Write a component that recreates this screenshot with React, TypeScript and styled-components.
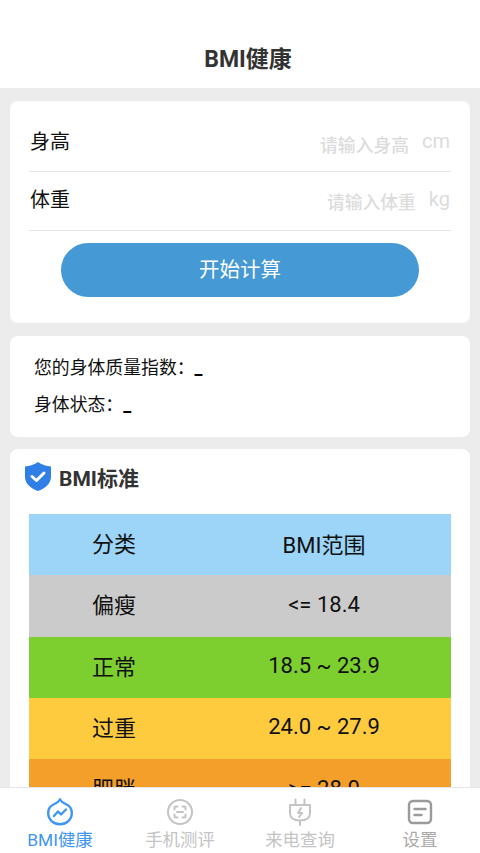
import React from 'react'
import styled, { createGlobalStyle } from 'styled-components'

const GlobalStyle = createGlobalStyle`
  html, body {
    margin: 0;
    padding: 0;
    height: 100%;
    overflow: hidden;
  }
  body {
    font-family: Roboto, "Noto Sans CJK SC", sans-serif;
    background: #ececec;
  }
`

const Screen = styled.div`
  height: 853px;
  width: 480px;
  display: flex;
  flex-direction: column;
  overflow: hidden;
  background: #ececec;
`
const Header = styled.header`
  height: 88px;
  flex: none;
  box-sizing: border-box;
  padding: 42px 0 0 16px;
  background: #fff;
  text-align: center;
  font-size: 23px;
  line-height: 36px;
  font-weight: 700;
  color: #333;
`
const Content = styled.main`
  flex: 1;
  min-height: 0;
  overflow: hidden;
  padding: 13px 10px 0;
  display: flex;
  flex-direction: column;
`
const Card = styled.section`
  flex: none;
  background: #fff;
  border-radius: 8px;
`
const FormCard = styled(Card)`
  height: 222px;
  box-sizing: border-box;
  padding: 12px 19px 0;
`
const Field = styled.div<{ $height: number; $lift: number }>`
  height: ${p => p.$height}px;
  box-sizing: border-box;
  padding-bottom: ${p => p.$lift}px;
  border-bottom: 1px solid #e4e4e4;
  display: flex;
  align-items: center;
  justify-content: space-between;
`
const FieldLabel = styled.span`
  font-size: 20px;
  color: #111;
  margin: -3px 0 0 1px;
`
const FieldRight = styled.div`
  display: flex;
  align-items: center;
  gap: 13px;
  margin-right: 1px;
`
const Placeholder = styled.span`
  font-size: 17.800px;
  font-weight: 500;
  color: #dcdcdc;
  margin-top: 3px;
`
const Unit = styled.span`
  font-size: 20px;
  color: #dcdcdc;
  margin-top: -2px;
`
const CalcButton = styled.button`
  display: block;
  width: 358px;
  height: 54px;
  margin: 12px auto 0;
  border: none;
  border-radius: 27px;
  background: #4599d4;
  color: #fff;
  font: inherit;
  font-size: 20.500px;
  padding: 0 0 5px;
`
const ResultCard = styled(Card)`
  height: 101px;
  margin-top: 13px;
  box-sizing: border-box;
  padding: 18px 24px 0;
  display: flex;
  flex-direction: column;
  gap: 9px;
`
const ResultRow = styled.div`
  font-size: 17.850px;
  line-height: 28px;
  color: #111;
`
const Blank = styled.span`
  font-weight: 700;
  color: #000;
`
const StandardCard = styled(Card)`
  margin-top: 12px;
  padding: 0 19px;
  height: 400px;
`
const StandardTitle = styled.div`
  height: 65px;
  box-sizing: border-box;
  padding-bottom: 10px;
  display: flex;
  align-items: center;
  gap: 8px;
  margin-left: -4px;
  font-size: 21px;
  font-weight: 700;
  color: #333;
`
const ScaleTable = styled.div`
  display: flex;
  flex-direction: column;
`
const ScaleRow = styled.div<{ $bg: string }>`
  height: 61.250px;
  display: grid;
  grid-template-columns: 168px 1fr;
  align-items: center;
  background: ${p => p.$bg};
  color: #111;
  font-size: 22px;
`
const ScaleName = styled.span`
  padding: 0 0 5px 63px;
`
const ScaleRange = styled.span`
  text-align: center;
  padding-bottom: 3px;
`
const TabBar = styled.nav`
  height: 65px;
  flex: none;
  background: #fff;
  border-top: 1px solid #e6e6e6;
  display: grid;
  grid-template-columns: repeat(4, 120px);
`
const Tab = styled.div<{ $color: string }>`
  display: flex;
  flex-direction: column;
  align-items: center;
  padding-top: 10px;
  color: ${p => p.$color};
  font-size: 17.400px;
  line-height: 28px;
`
const TabIcon = styled.svg`
  display: block;
  width: 28px;
  height: 28px;
`

const rows = [
  { name: '分类', range: 'BMI范围', bg: '#9cd5f7' },
  { name: '偏瘦', range: '<= 18.4', bg: '#cbcbcb' },
  { name: '正常', range: '18.5 ~ 23.9', bg: '#7dce2f' },
  { name: '过重', range: '24.0 ~ 27.9', bg: '#fecb3e' },
  { name: '肥胖', range: '>= 28.0', bg: '#f39f2a' },
]

export default function App() {
  return (
    <Screen>
      <GlobalStyle />
      <Header>BMI健康</Header>
      <Content>
        <FormCard>
          <Field $height={59} $lift={0}>
            <FieldLabel>身高</FieldLabel>
            <FieldRight>
              <Placeholder>请输入身高</Placeholder>
              <Unit>cm</Unit>
            </FieldRight>
          </Field>
          <Field $height={59} $lift={3}>
            <FieldLabel>体重</FieldLabel>
            <FieldRight>
              <Placeholder>请输入体重</Placeholder>
              <Unit>kg</Unit>
            </FieldRight>
          </Field>
          <CalcButton type="button">开始计算</CalcButton>
        </FormCard>

        <ResultCard>
          <ResultRow>您的身体质量指数：<Blank>_</Blank></ResultRow>
          <ResultRow>身体状态：<Blank>_</Blank></ResultRow>
        </ResultCard>

        <StandardCard>
          <StandardTitle>
            <svg width="26" height="29" viewBox="0 0 26 29">
              <path d="M13 0 C16.500 2.500 21 4 26 4.500 V15 C26 21.500 20 26.500 13 29 C6 26.500 0 21.500 0 15 V4.500 C5 4 9.500 2.500 13 0 Z" fill="#2f7fe6" />
              <path d="M7 14.500 L11.500 18.500 L19 11" fill="none" stroke="#fff" strokeWidth="3" strokeLinecap="round" strokeLinejoin="round" />
            </svg>
            BMI标准
          </StandardTitle>
          <ScaleTable>
            {rows.map(r => (
              <ScaleRow key={r.name} $bg={r.bg}>
                <ScaleName>{r.name}</ScaleName>
                <ScaleRange>{r.range}</ScaleRange>
              </ScaleRow>
            ))}
          </ScaleTable>
        </StandardCard>
      </Content>

      <TabBar>
        <Tab $color="#3f96f5">
          <TabIcon viewBox="0 0 28 28" fill="none" stroke="#3f96f5" strokeWidth="2.400">
            <path d="M14 1.500 C15.500 4 17 5 19.500 6 C23.500 7.500 25.800 11 25.800 15 C25.800 21.500 20.500 26.300 14 26.300 C7.500 26.300 2.200 21.500 2.200 15 C2.200 11 4.500 7.500 8.500 6 C11 5 12.500 4 14 1.500 Z" />
            <path d="M8 18 L12 13.500 L15 16.500 L20 11.500" strokeLinecap="round" strokeLinejoin="round" />
          </TabIcon>
          BMI健康
        </Tab>
        <Tab $color="#c4c4c4">
          <TabIcon viewBox="0 0 28 28" fill="none" stroke="#c4c4c4" strokeWidth="2">
            <circle cx="14" cy="14" r="12" />
            <path d="M8.500 11.500 V10 Q8.500 8.500 10 8.500 H11.500 M16.500 8.500 H18 Q19.500 8.500 19.500 10 V11.500 M8.500 16.500 V18 Q8.500 19.500 10 19.500 H11.500 M16.500 19.500 H18 Q19.500 19.500 19.500 18 V16.500 M11 14 H17" strokeLinecap="round" />
          </TabIcon>
          手机测评
        </Tab>
        <Tab $color="#c4c4c4">
          <TabIcon viewBox="0 0 28 28" fill="none" stroke="#c4c4c4" strokeWidth="2">
            <path d="M4 7 H24 V15 C24 20 20 22.500 14 22.500 C8 22.500 4 20 4 15 Z M9.500 7 V1.500 M18.500 7 V1.500 M14 22.500 V27" strokeLinecap="round" strokeLinejoin="round" />
            <path d="M15 10 L12 15 H16 L13 19" strokeLinecap="round" strokeLinejoin="round" />
          </TabIcon>
          来电查询
        </Tab>
        <Tab $color="#aaaaaa">
          <TabIcon viewBox="0 0 28 28" fill="none" stroke="#9a9a9a" strokeWidth="2.400">
            <rect x="3" y="3" width="22" height="22" rx="4" />
            <path d="M8.500 11 H19.500 M8.500 17 H15.500" strokeLinecap="round" />
          </TabIcon>
          设置
        </Tab>
      </TabBar>
    </Screen>
  )
}
